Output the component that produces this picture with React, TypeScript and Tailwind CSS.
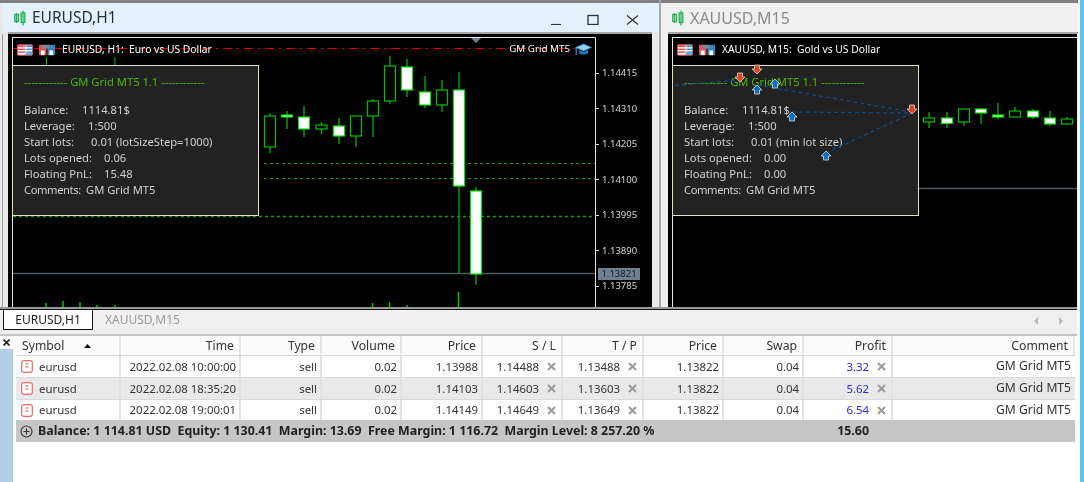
import React from "react";

type C = [number, number, number, number, number, boolean];

const leftCandles: C[] = [
  [270, 116, 147, 113, 153, false],
  [287, 115, 117, 111, 129, true],
  [304, 117, 129, 106, 137, true],
  [321.5, 125, 129, 122, 134, false],
  [339, 126, 136, 118, 144, true],
  [356, 116, 136, 116, 147, false],
  [373, 101, 116, 99, 137, false],
  [390, 66, 101, 56, 104, false],
  [407, 67, 90, 59, 97, true],
  [425, 92, 105, 76, 108, true],
  [442, 90, 105, 80, 112, false],
  [459, 90, 186, 72, 273, true],
  [476, 191, 274, 187, 285, true],
];

const rightCandles: C[] = [
  [929, 118, 122, 112, 128, false],
  [947, 118, 123.5, 112, 128, true],
  [964, 109, 122, 109, 126, false],
  [981, 109, 113, 108, 124, true],
  [998, 115, 117, 103, 119, true],
  [1015, 111, 117, 107, 117, false],
  [1033, 111, 117, 109, 119, true],
  [1050, 118, 124, 111, 126, true],
  [1067, 119, 124, 117, 125, false],
];

function Candles({ items }: { items: C[] }) {
  return (
    <>
      {items.map(([x, t, b, wt, wb, filled], i) => (
        <g key={i}>
          <line x1={x} x2={x} y1={wt} y2={wb} stroke="#00b400" strokeWidth="1.3" />
          <rect
            x={x - 5.5}
            y={t}
            width="11"
            height={b - t}
            fill={filled ? "#ffffff" : "#000000"}
            stroke={filled ? "#00e000" : "#00c000"}
            strokeWidth="1.2"
          />
        </g>
      ))}
    </>
  );
}

function TableIcon() {
  return (
    <svg width="16" height="12" viewBox="0 0 17 12" className="shrink-0">
      <rect x="0.5" y="0.5" width="16" height="11" rx="1" fill="#ffffff" stroke="#e05050" />
      <rect x="1" y="1" width="8" height="2" fill="#e85050" />
      <rect x="1" y="4.5" width="8" height="1.5" fill="#e85050" />
      <rect x="1" y="7.5" width="8" height="1.5" fill="#e85050" />
      <rect x="10" y="1" width="6" height="2" fill="#3f8fd0" />
      <rect x="10" y="4.5" width="6" height="1.5" fill="#3f8fd0" />
      <rect x="10" y="7.5" width="6" height="1.5" fill="#3f8fd0" />
      <rect x="9" y="9.5" width="7" height="1.5" fill="#3f8fd0" />
    </svg>
  );
}

function SaveIcon() {
  return (
    <svg width="16" height="12" viewBox="0 0 17 12" className="shrink-0">
      <rect x="0" y="0.5" width="8" height="11" fill="#e85050" />
      <rect x="9" y="0.5" width="8" height="11" fill="#2f86c8" />
      <rect x="3" y="0.5" width="8" height="4" fill="#808890" />
      <rect x="2" y="6.5" width="4" height="5" fill="#ffffff" />
      <rect x="11" y="6.5" width="4" height="5" fill="#ffffff" />
    </svg>
  );
}

function Cap() {
  return (
    <svg width="17" height="13" viewBox="0 0 17 13" className="shrink-0">
      <path d="M8.5 1 L16.5 4.5 L8.5 8 L0.5 4.5 Z" fill="#8fd0ee" stroke="#2f86c8" strokeWidth="0.7" />
      <path d="M4 7 V10 C6 12 11 12 13 10 V7 L8.5 9 Z" fill="#1f78b8" />
      <rect x="0.5" y="5" width="1.5" height="7" fill="#1f78b8" />
    </svg>
  );
}

function CandleIcon() {
  return (
    <svg width="12" height="16" viewBox="0 0 12 16" className="shrink-0">
      <path d="M2.5 3V13M9 0.5V15.5" stroke="#20b050" strokeWidth="1.2" />
      <rect x="0.8" y="4.5" width="3.6" height="7" fill="none" stroke="#20b050" strokeWidth="1.3" />
      <rect x="7.2" y="3" width="3.6" height="9.5" fill="none" stroke="#20b050" strokeWidth="1.3" />
    </svg>
  );
}

function Arrow({ x, y, up }: { x: number; y: number; up?: boolean }) {
  const d = up
    ? `M${x} ${y - 5} L${x + 5} ${y} H${x + 2.5} V${y + 4} H${x - 2.5} V${y} H${x - 5} Z`
    : `M${x} ${y + 5} L${x + 5} ${y} H${x + 2.5} V${y - 4} H${x - 2.5} V${y} H${x - 5} Z`;
  return <path d={d} fill={up ? "#0b6fc0" : "#e2431e"} stroke="#d8d8d8" strokeWidth="0.8" />;
}

const rowsLeft: [string, string, string][] = [
  ["Balance:", "w-[58px]", "1114.81$"],
  ["Leverage:", "w-[64px]", "1:500"],
  ["Start lots:", "w-[67px]", "0.01 (lotSizeStep=1000)"],
  ["Lots opened:", "w-[80px]", "0.06"],
  ["Floating PnL:", "w-[80px]", "15.48"],
  ["Comments:", "w-[62px] tracking-[-0.4px]", "GM Grid MT5"],
];

const rowsRight: [string, string, string][] = [
  ["Balance:", "w-[58px]", "1114.81$"],
  ["Leverage:", "w-[64px]", "1:500"],
  ["Start lots:", "w-[67px]", "0.01 (min lot size)"],
  ["Lots opened:", "w-[80px]", "0.00"],
  ["Floating PnL:", "w-[80px]", "0.00"],
  ["Comments:", "w-[62px] tracking-[-0.4px]", "GM Grid MT5"],
];

function InfoPanel({ rows }: { rows: [string, string, string][] }) {
  return (
    <div className="absolute left-[4px] top-[31px] w-[247px] h-[151px] bg-[#222222] border border-[#e4e2c4] pl-[11px] text-[11.2px] text-[#cfcfcf]">
      <div className="h-[24px] flex items-end text-[#4fb800] whitespace-pre leading-[16px]">
        ------------ GM Grid MT5 1.1 ------------
      </div>
      <div className="mt-[12px]">
        {rows.map(([k, w, v]) => (
          <div key={k} className="flex h-[16px] items-center whitespace-nowrap">
            <span className={`${w} shrink-0`}>{k}</span>
            <span>{v}</span>
          </div>
        ))}
      </div>
    </div>
  );
}

const prices: [string, string][] = [
  ["1.14415", "top-[32px]"],
  ["1.14310", "top-[68px]"],
  ["1.14205", "top-[103px]"],
  ["1.14100", "top-[139px]"],
  ["1.13995", "top-[174px]"],
  ["1.13890", "top-[210px]"],
  ["1.13785", "top-[245px]"],
];

function LeftChart() {
  return (
    <div className="relative w-[644px] h-[273px] bg-black overflow-hidden shrink-0">
      <svg width="644" height="273" viewBox="8 34 644 273" className="absolute inset-0">
        <path d="M12.5 37V307M12 37.5H595.5V307" fill="none" stroke="#e6e6e6" strokeWidth="1" />
        <path d="M471 38H481L476 43Z" fill="#708090" />
        <line x1="13" x2="575" y1="48.5" y2="48.5" stroke="#e00000" strokeWidth="1.2" strokeDasharray="9 5 2 5" />
        <path d="M46.5 57V66M115 57V66" stroke="#00c000" />
        <line x1="264" x2="595" y1="163.5" y2="163.5" stroke="#10a010" strokeWidth="1.2" strokeDasharray="3 3" />
        <line x1="264" x2="595" y1="178.5" y2="178.5" stroke="#10a010" strokeWidth="1.2" strokeDasharray="3 3" />
        <line x1="13" x2="595" y1="216.5" y2="216.5" stroke="#10a010" strokeWidth="1.4" strokeDasharray="3 3" />
        <line x1="13" x2="595" y1="273.5" y2="273.5" stroke="#4b5661" strokeWidth="1.3" />
        <Candles items={leftCandles} />
        <path
          d="M46 303V307M63 301V307M80 302V307M97 305V307M115 305V307M372.5 303V307M389.5 302V307M407 305V307M458.5 292V307"
          stroke="#10c010"
          strokeWidth="1.5"
        />
        <path d="M595 73.5H599M595 108.5H599M595 144.5H599M595 179.5H599M595 215.5H599M595 250.5H599M595 286.5H599" stroke="#e0e0e0" />
      </svg>
      <div className="absolute left-[9px] top-[10px] flex items-center gap-[6px] h-[12px]">
        <TableIcon />
        <SaveIcon />
        <span className="ml-[1px] text-[10.3px] text-white whitespace-pre">EURUSD, H1:  Euro vs US Dollar</span>
      </div>
      <div className="absolute right-[60px] top-[8px] flex items-center gap-[5px] h-[14px]">
        <span className="text-[9.8px] text-white whitespace-pre">GM Grid MT5</span>
        <Cap />
      </div>
      <InfoPanel rows={rowsLeft} />
      {prices.map(([p, t]) => (
        <span key={p} className={`absolute left-[594px] ${t} text-[9.5px] leading-[14px] text-[#d6d6d6]`}>
          {p}
        </span>
      ))}
      <span className="absolute left-[590px] top-[234px] w-[42px] h-[12px] bg-[#708090] text-center text-[9.5px] leading-[12px] text-[#101820]">
        1.13821
      </span>
    </div>
  );
}

function RightChart() {
  return (
    <div className="relative w-[409px] h-[273px] bg-black overflow-hidden shrink-0">
      <svg width="409" height="273" viewBox="668 34 409 273" className="absolute inset-0">
        <path d="M672.5 37V307M672 37.5H1077" fill="none" stroke="#e6e6e6" strokeWidth="1" />
        <line x1="919" x2="1077" y1="188.5" y2="188.5" stroke="#4b5661" strokeWidth="1.3" />
        <Candles items={rightCandles} />
      </svg>
      <div className="absolute left-[9px] top-[10px] flex items-center gap-[6px] h-[12px]">
        <TableIcon />
        <SaveIcon />
        <span className="ml-[1px] text-[10.3px] text-white whitespace-pre">XAUUSD, M15:  Gold vs US Dollar</span>
      </div>
      <InfoPanel rows={rowsRight} />
      <svg width="409" height="273" viewBox="668 34 409 273" className="absolute inset-0">
        <g fill="none" stroke="#0f4f8a" strokeWidth="1.2" strokeDasharray="4 3">
          <path d="M675 85.5L740 80" />
          <path d="M757 85L912 112" />
          <path d="M792 112L912 113" />
          <path d="M826 153L912 113" />
        </g>
        <Arrow x={757} y={69} />
        <Arrow x={740} y={77} />
        <Arrow x={912} y={109} />
        <Arrow x={757} y={90} up />
        <Arrow x={775} y={84} up />
        <Arrow x={792} y={117} up />
        <Arrow x={826} y={156} up />
      </svg>
    </div>
  );
}

const cols = "grid grid-cols-[105px_120px_81px_80px_81px_80px_81px_80px_80px_89px_182px]";

const trades = [
  ["2022.02.08 10:00:00", "1.13988", "1.14488", "1.13488", "3.32"],
  ["2022.02.08 18:35:20", "1.14103", "1.14603", "1.13603", "5.62"],
  ["2022.02.08 19:00:01", "1.14149", "1.14649", "1.13649", "6.54"],
];

function Xm() {
  return (
    <svg width="9" height="9" viewBox="0 0 9 9" className="ml-[8px] mr-[2px] shrink-0">
      <path d="M1 1L8 8M8 1L1 8" stroke="#9a9a9a" strokeWidth="2" />
    </svg>
  );
}

function Head({ children }: { children: React.ReactNode }) {
  return (
    <div className="bg-[#fbfbfb] border-r-2 border-[#e6e6e6] flex items-center justify-end pr-[5px] pt-[1px] text-[12.2px] text-[#333]">
      {children}
    </div>
  );
}

function Cell({ children, blue }: { children: React.ReactNode; blue?: boolean }) {
  return (
    <div className={`border-r-2 border-[#e2e2e2] flex items-center justify-end pr-[3px] ${blue ? "text-[#2a2ae0]" : "text-[#333]"}`}>
      {children}
    </div>
  );
}

function Terminal() {
  return (
    <div className="flex-1 flex bg-white text-[11.4px]">
      <div className="w-[16px] flex flex-col shrink-0 bg-white">
        <div className="h-[13px] flex items-center justify-center pr-[3px]">
          <svg width="7" height="7" viewBox="0 0 7 7">
            <path d="M0.5 0.5L6.5 6.5M6.5 0.5L0.5 6.5" stroke="#222" strokeWidth="1.6" />
          </svg>
        </div>
        <div className="flex-1 w-[13px] bg-[#b5cde6]" />
      </div>
      <div className="w-[1059px] shrink-0">
        <div className={`${cols} h-[19px]`}>
          <div className="bg-[#fbfbfb] border-r-2 border-[#e6e6e6] flex items-center pl-[6px] pt-[1px] text-[12.2px] text-[#333]">
            <span>Symbol</span>
            <svg width="7" height="4" viewBox="0 0 7 4" className="ml-[20px]">
              <path d="M0 4L3.5 0L7 4Z" fill="#111" />
            </svg>
          </div>
          {["Time", "Type", "Volume", "Price", "S / L", "T / P", "Price", "Swap", "Profit", "Comment"].map((h, i) => (
            <Head key={i}>{h}</Head>
          ))}
        </div>
        {trades.map(([t, p, sl, tp, pr], i) => (
          <div
            key={t}
            className={`${cols} ${i < 2 ? "h-[22px]" : "h-[21px]"} border-t border-[#d9d9d9] ${i === 1 ? "bg-[#e9e9e9]" : "bg-white"}`}
          >
            <div className="border-r-2 border-[#e2e2e2] flex items-center pl-[5px] gap-[6px] text-[#333]">
              <svg width="12" height="13" viewBox="0 0 12 13" className="shrink-0">
                <rect x="0.7" y="0.7" width="10.6" height="11.6" rx="2" fill="#ffffff" stroke="#e86a6a" strokeWidth="1.2" />
                <path d="M4.5 4H7.5M4.5 7H7.5" stroke="#e05050" />
              </svg>
              <span>eurusd</span>
            </div>
            <Cell>{t}</Cell>
            <Cell>sell</Cell>
            <Cell>0.02</Cell>
            <Cell>{p}</Cell>
            <Cell>{sl}<Xm /></Cell>
            <Cell>{tp}<Xm /></Cell>
            <Cell>1.13822</Cell>
            <Cell>0.04</Cell>
            <Cell blue>{pr}<Xm /></Cell>
            <div className="flex items-center justify-end pr-[4px] text-[12.1px] text-[#333]">GM Grid MT5</div>
          </div>
        ))}
        <div className={`${cols} h-[22px] bg-[#c6c6c6] font-bold text-[12.4px] text-[#222]`}>
          <div className="col-span-9 flex items-center pl-[4px] gap-[5px] whitespace-pre">
            <svg width="13" height="13" viewBox="0 0 13 13" className="shrink-0">
              <circle cx="6.5" cy="6.5" r="5.5" fill="none" stroke="#333" strokeWidth="1.1" />
              <path d="M3.5 6.5H9.5M6.5 3.5V9.5" stroke="#333" strokeWidth="1.1" />
            </svg>
            <span>Balance: 1 114.81 USD  Equity: 1 130.41  Margin: 13.69  Free Margin: 1 116.72  Margin Level: 8 257.20 %</span>
          </div>
          <div className="flex items-center justify-end pr-[24px]">15.60</div>
        </div>
      </div>
    </div>
  );
}

export default function App() {
  return (
    <div className="w-[1084px] h-[482px] overflow-hidden flex bg-white font-['Noto_Sans','Liberation_Sans',sans-serif] blur-[0.3px]">
      <div className="w-[1080px] flex flex-col shrink-0">
        <div className="flex h-[307px] shrink-0">
          <div className="w-[659px] flex flex-col border-t-[3px] border-[#808080] bg-[#e9e9e9] shrink-0">
            <div className="h-[29px] flex items-center bg-[#e5f1fc] pl-[12px] ml-[2px] -mr-[1px] shrink-0">
              <CandleIcon />
              <span className="ml-[6px] text-[15.5px] text-[#22303f]">EURUSD,H1</span>
              <svg width="100" height="14" viewBox="0 0 100 14" className="ml-auto mr-[9px]">
                <path d="M0 13.5H10" stroke="#333" strokeWidth="1.2" />
                <rect x="37" y="4.5" width="10" height="9" fill="none" stroke="#333" strokeWidth="1.3" />
                <path d="M76 4.5L87 13.5M87 4.5L76 13.5" stroke="#333" strokeWidth="1.2" />
              </svg>
            </div>
            <div className="h-[2px] bg-[#a6a6a6] ml-[8px] mr-[7px] shrink-0" />
            <div className="ml-[2px] pl-[5px] border-l border-[#a0a0a0]">
              <LeftChart />
            </div>
          </div>
          <div className="w-[2px] bg-[#a8a8a8] shrink-0" />
          <div className="w-[417px] flex flex-col border-t-[3px] border-[#808080] bg-[#f0f0f0] shrink-0">
            <div className="h-[29px] flex items-center pl-[11px] shrink-0">
              <CandleIcon />
              <span className="ml-[6px] text-[16px] text-[#8a8a8a]">XAUUSD,M15</span>
            </div>
            <div className="h-[2px] bg-[#a6a6a6] ml-[7px] shrink-0" />
            <div className="pl-[7px]">
              <RightChart />
            </div>
          </div>
        </div>
        <div className="h-[2px] bg-[#9a9a9a] mr-[3px] shrink-0" />
        <div className="h-[27px] mr-[3px] shrink-0 flex items-start bg-[#f0f0f0] border-t border-[#111] border-b-[2px] border-b-[#c4c4c4] pl-[3px]">
          <div className="w-[90px] h-[20px] bg-white border border-t-0 border-[#111] text-[12px] text-[#222] flex items-center justify-center">
            EURUSD,H1
          </div>
          <div className="ml-[12px] h-[20px] text-[12px] text-[#9a9a9a] flex items-center">XAUUSD,M15</div>
          <svg width="30" height="8" viewBox="0 0 30 8" className="ml-auto mr-[13px] mt-[7px]">
            <path d="M4 0V8L0 4ZM25 0V8L29 4Z" fill="#b8b8b8" />
          </svg>
        </div>
        <Terminal />
      </div>
      <div className="flex-1 bg-[#5ec4ee]" />
    </div>
  );
}
